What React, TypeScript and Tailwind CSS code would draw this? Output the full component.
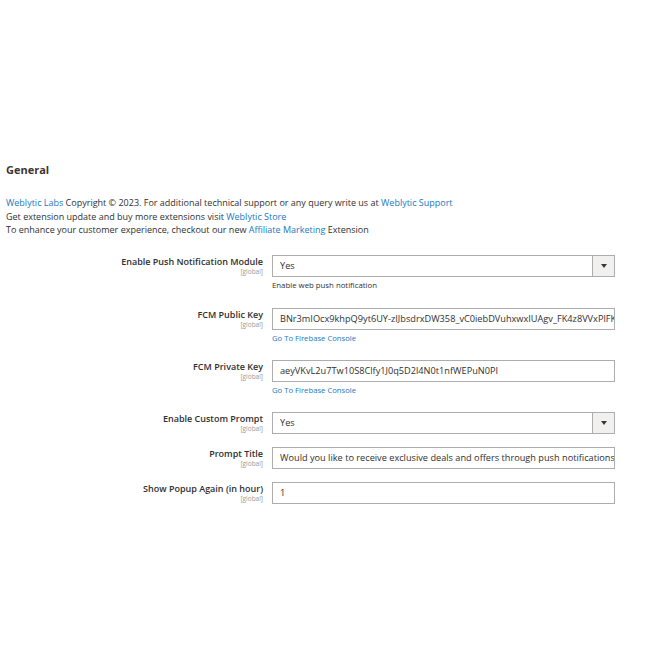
const font = { fontFamily: '"Open Sans", "Noto Sans", sans-serif' };

type Row = {
  label: string;
  kind: "select" | "text";
  value: string;
  note?: string;
  link?: string;
};

const rows: Row[] = [
  { label: "Enable Push Notification Module", kind: "select", value: "Yes", note: "Enable web push notification" },
  {
    label: "FCM Public Key",
    kind: "text",
    value: "BNr3mIOcx9khpQ9yt6UY-zIJbsdrxDW358_vC0iebDVuhxwxIUAgv_FK4z8VVxPlFKs",
    link: "Go To Firebase Console",
  },
  { label: "FCM Private Key", kind: "text", value: "aeyVKvL2u7Tw10S8Clfy1J0q5D2l4N0t1nfWEPuN0PI", link: "Go To Firebase Console" },
  { label: "Enable Custom Prompt", kind: "select", value: "Yes" },
  { label: "Prompt Title", kind: "text", value: "Would you like to receive exclusive deals and offers through push notifications?" },
  { label: "Show Popup Again (in hour)", kind: "text", value: "1" },
];

function Field({ row }: { row: Row }) {
  return (
    <div className="flex items-start">
      <div className="w-[263px] shrink-0 pt-[2px] text-right">
        <div className="text-[9px] font-semibold leading-[10px] text-[#303030]">{row.label}</div>
        <div className="mt-[1px] text-[6.5px] leading-[8px] text-[#999]">[global]</div>
      </div>
      <div className="ml-[9px] w-[343px]">
        {row.kind === "select" ? (
          <div className="flex h-[22px] border border-[#adadad] bg-white">
            <div className="flex flex-1 items-center pl-[7px] text-[9.2px] text-[#303030]">{row.value}</div>
            <div className="flex w-[22px] items-center justify-center border-l border-[#adadad] bg-[#f0f0f0]">
              <div className="h-0 w-0 border-x-[3px] border-t-[4px] border-x-transparent border-t-[#41362f]" />
            </div>
          </div>
        ) : (
          <div className="flex h-[22px] items-center overflow-hidden whitespace-nowrap border border-[#adadad] bg-white pl-[7px] text-[9.2px] text-[#303030]">
            {row.value}
          </div>
        )}
        {row.note && <div className="mt-[3px] text-[7.8px] leading-[10px] text-[#303030]">{row.note}</div>}
        {row.link && <div className="mt-[3px] text-[7.7px] leading-[10px] text-[#1979c3]">{row.link}</div>}
      </div>
    </div>
  );
}

export default function App() {
  return (
    <div className="h-[670px] w-[670px] bg-white" style={font}>
      <div className="pl-[6px] pt-[163px]">
        <h2 className="text-[11px] font-bold leading-[14px] text-[#41362f]">General</h2>
        <div className="mt-[19px] text-[9px] leading-[13.6px] text-[#303030]">
          <p>
            <span className="text-[#1979c3]">Weblytic Labs</span> Copyright © 2023. For additional technical support or any
            query write us at <span className="text-[#1979c3]">Weblytic Support</span>
          </p>
          <p>
            Get extension update and buy more extensions visit <span className="text-[#1979c3]">Weblytic Store</span>
          </p>
          <p>
            To enhance your customer experience, checkout our new{" "}
            <span className="text-[#1979c3]">Affiliate Marketing</span> Extension
          </p>
        </div>
      </div>
      <div className="mt-[18px] flex flex-col">
        <div className="mb-[18px]"><Field row={rows[0]} /></div>
        <div className="mb-[17px]"><Field row={rows[1]} /></div>
        <div className="mb-[17px]"><Field row={rows[2]} /></div>
        <div className="mb-[13px]"><Field row={rows[3]} /></div>
        <div className="mb-[13px]"><Field row={rows[4]} /></div>
        <Field row={rows[5]} />
      </div>
    </div>
  );
}
